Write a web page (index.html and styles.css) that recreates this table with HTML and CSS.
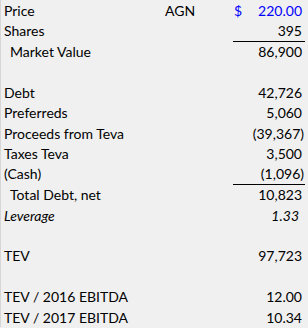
FILE: index.html
```html
<!DOCTYPE html>
<html>
<head>
<meta charset="utf-8">
<link rel="stylesheet" href="styles.css">
</head>
<body>
<div class="sheet">
  <div class="row"><span class="label">Price</span><span class="tick">AGN</span><span class="val blue"><span>$</span><span>220.00</span></span></div>
  <div class="row r21"><span class="label">Shares</span><span></span><span class="val u"><span></span><span>395</span></span></div>
  <div class="row r21"><span class="label ind">Market Value</span><span></span><span class="val"><span></span><span>86,900</span></span></div>
  <div class="row"></div>
  <div class="row"><span class="label">Debt</span><span></span><span class="val"><span></span><span>42,726</span></span></div>
  <div class="row r21"><span class="label">Preferreds</span><span></span><span class="val"><span></span><span>5,060</span></span></div>
  <div class="row"><span class="label">Proceeds from Teva</span><span></span><span class="val neg"><span></span><span>(39,367)</span></span></div>
  <div class="row"><span class="label">Taxes Teva</span><span></span><span class="val"><span></span><span>3,500</span></span></div>
  <div class="row r21"><span class="label">(Cash)</span><span></span><span class="val neg u"><span></span><span>(1,096)</span></span></div>
  <div class="row r21"><span class="label ind">Total Debt, net</span><span></span><span class="val"><span></span><span>10,823</span></span></div>
  <div class="row"><span class="label it">Leverage</span><span></span><span class="val it"><span></span><span>1.33</span></span></div>
  <div class="row"></div>
  <div class="row r21"><span class="label">TEV</span><span></span><span class="val"><span></span><span>97,723</span></span></div>
  <div class="row"></div>
  <div class="row r21"><span class="label">TEV / 2016 EBITDA</span><span></span><span class="val"><span></span><span>12.00</span></span></div>
  <div class="row"><span class="label">TEV / 2017 EBITDA</span><span></span><span class="val"><span></span><span>10.34</span></span></div>
</div>
</body>
</html>
```
FILE: styles.css
```css
html, body {
  margin: 0;
  padding: 0;
  background: #f0f0f0;
}
.sheet {
  width: 308px;
  font-family: Lato, "Open Sans", sans-serif;
  font-size: 14px;
  color: #000;
}
.row {
  display: grid;
  grid-template-columns: 160px 72px 72px;
  height: 20px;
  align-items: start;
  box-sizing: border-box;
  border-left: 1px solid #d6d6d6;
}
.row.r21 {
  height: 21px;
}
.row > span {
  line-height: 20px;
  white-space: nowrap;
  padding-top: 1px;
  box-sizing: border-box;
}
.label {
  padding-left: 3px;
}
.label.ind {
  padding-left: 9px;
}
.tick {
  padding-left: 4px;
}
.it {
  font-style: italic;
}
.val {
  display: flex;
  justify-content: space-between;
  padding-right: 3px;
  padding-left: 1px;
  height: 22px;
}
.val.neg {
  padding-right: 1px;
}
.val.it {
  padding-right: 6px;
}
.val.u {
  border-bottom: 1px solid #000;
}
.blue {
  color: #0000ff;
}
```
